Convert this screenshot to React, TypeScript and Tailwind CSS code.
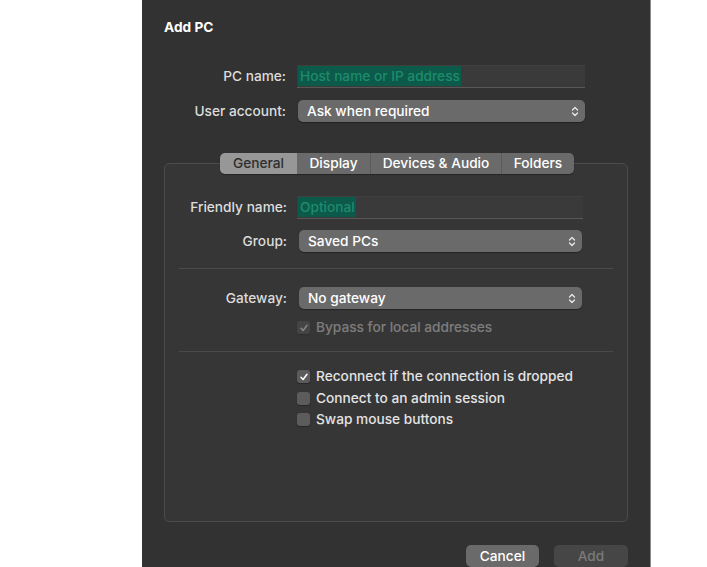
import React from "react";

const Chevrons = () => (
  <svg width="8" height="11" viewBox="0 0 8 11" className="shrink-0">
    <path d="M1.5 4 L4 1.5 L6.5 4" fill="none" stroke="#e8e8e8" strokeWidth="1.3" strokeLinecap="round" strokeLinejoin="round" />
    <path d="M1.5 7 L4 9.5 L6.5 7" fill="none" stroke="#e8e8e8" strokeWidth="1.3" strokeLinecap="round" strokeLinejoin="round" />
  </svg>
);

const Popup = ({ value, width }: { value: string; width: string }) => (
  <div className={`${width} h-[22px] flex items-center justify-between rounded-[5px] bg-[#6a6a6a] pl-[9px] pr-[6px] text-white shadow-[0_1px_1px_rgba(0,0,0,0.35)]`}>
    <span>{value}</span>
    <Chevrons />
  </div>
);

const Field = ({ placeholder, width }: { placeholder: string; width: string }) => (
  <div className={`${width} h-[23px] flex items-center bg-[#3a3a3a] border-t border-t-[#3f3f3f] border-b border-b-[#585858] pl-[1px]`}>
    <span className="bg-[#0b5a4a] text-[#1e8b6d] h-[20px] leading-[20px] pl-[2px] pr-[1px]">{placeholder}</span>
  </div>
);

const Check = ({ checked, disabled, label }: { checked?: boolean; disabled?: boolean; label: string }) => (
  <div className={`flex items-center gap-[6px] h-[21px] ${disabled ? "opacity-40" : ""}`}>
    <div className="w-[13px] h-[13px] rounded-[3px] bg-[#5c5c5c] flex items-center justify-center shadow-[0_1px_1px_rgba(0,0,0,0.3)]">
      {checked && (
        <svg width="10" height="10" viewBox="0 0 10 10">
          <path d="M2 5.3 L4.1 7.5 L8 2.3" fill="none" stroke="#ffffff" strokeWidth="1.5" strokeLinecap="round" strokeLinejoin="round" />
        </svg>
      )}
    </div>
    <span className="text-[#e4e4e4]">{label}</span>
  </div>
);

const tabs = ["General", "Display", "Devices & Audio", "Folders"];
const tabW = ["w-[77px]", "w-[73px]", "w-[131px]", "w-[73px]"];

export default function App() {
  return (
    <div className="w-[707px] h-[567px] bg-white overflow-hidden" style={{ fontFamily: "Inter, 'Noto Sans', sans-serif" }}>
      <div className="ml-[142px] w-[509px] h-[567px] bg-[#323232] border-r border-r-[#8a8a8a] text-[13.7px] font-medium text-[#dcdcdc] flex flex-col">
        <div className="pl-[22px] pt-[17px] h-[55px] font-bold text-white">Add PC</div>

        <div className="flex items-center h-[24px] mt-[9px]">
          <div className="w-[144px] text-right">PC name:</div>
          <div className="ml-[11px]">
            <Field placeholder="Host name or IP address" width="w-[288px]" />
          </div>
        </div>
        <div className="flex items-center h-[24px] mt-[11px]">
          <div className="w-[144px] text-right">User account:</div>
          <div className="ml-[12px]">
            <Popup value="Ask when required" width="w-[287px]" />
          </div>
        </div>

        <div className="relative ml-[22px] w-[464px] mt-[30px]">
          <div className="relative z-10 ml-[56px] flex h-[21px] rounded-[5px] overflow-hidden w-[354px] shadow-[0_1px_1px_rgba(0,0,0,0.35)]">
            {tabs.map((t, i) => (
              <div
                key={t}
                className={`${tabW[i]} flex items-center justify-center ${i === 0 ? "bg-[#979797] text-[#2e2e2e]" : "bg-[#6a6a6a] text-white"} ${i > 1 ? "border-l border-l-[#5a5a5a]" : ""}`}
              >
                {t}
              </div>
            ))}
          </div>
          <div className="-mt-[11px] h-[359px] rounded-[5px] border border-[#4c4c4c] bg-[#363636] flex flex-col px-[14px] pt-[31px]">
            <div className="flex items-center h-[24px]">
              <div className="w-[108px] text-right">Friendly name:</div>
              <div className="ml-[10px]">
                <Field placeholder="Optional" width="w-[286px]" />
              </div>
            </div>
            <div className="flex items-center h-[24px] mt-[10px]">
              <div className="w-[108px] text-right">Group:</div>
              <div className="ml-[12px]">
                <Popup value="Saved PCs" width="w-[283px]" />
              </div>
            </div>
            <div className="mt-[15px] h-px bg-[#4a4a4a]" />
            <div className="flex items-center h-[24px] mt-[17px]">
              <div className="w-[108px] text-right">Gateway:</div>
              <div className="ml-[12px]">
                <Popup value="No gateway" width="w-[283px]" />
              </div>
            </div>
            <div className="ml-[118px] mt-[7px]">
              <Check checked disabled label="Bypass for local addresses" />
            </div>
            <div className="mt-[13px] h-px bg-[#4a4a4a]" />
            <div className="ml-[118px] mt-[14px] flex flex-col gap-[0.5px]">
              <Check checked label="Reconnect if the connection is dropped" />
              <Check label="Connect to an admin session" />
              <Check label="Swap mouse buttons" />
            </div>
          </div>
        </div>

        <div className="flex justify-end gap-[15px] pr-[22px] mt-[23px]">
          <div className="w-[73px] h-[22px] rounded-[5px] bg-[#6a6a6a] text-white flex items-center justify-center shadow-[0_1px_1px_rgba(0,0,0,0.35)]">Cancel</div>
          <div className="w-[74px] h-[22px] rounded-[5px] bg-[#464646] text-[#7a7a7a] flex items-center justify-center">Add</div>
        </div>
      </div>
    </div>
  );
}
